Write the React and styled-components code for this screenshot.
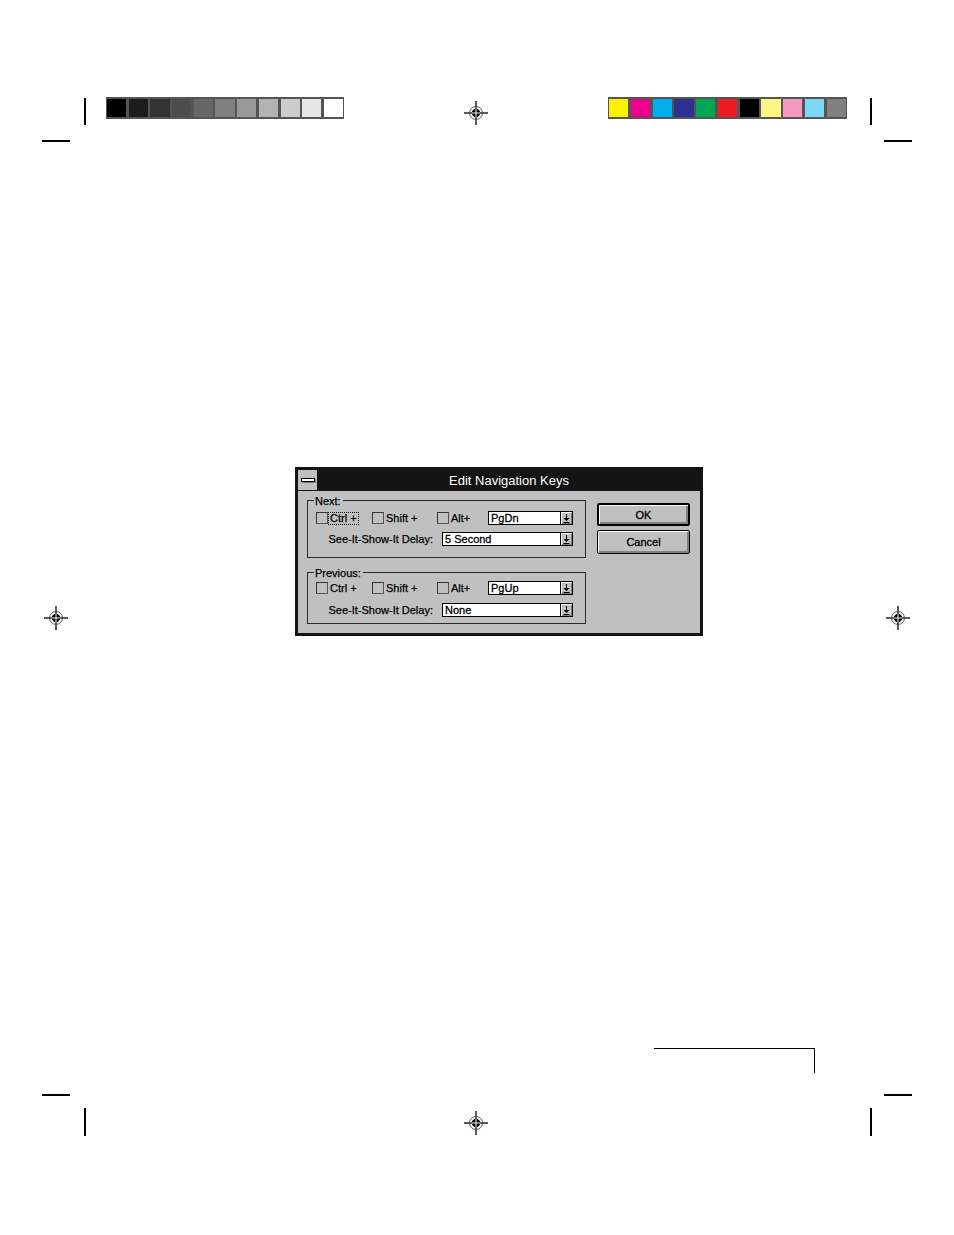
import React from 'react';
import styled, { createGlobalStyle } from 'styled-components';

const Global = createGlobalStyle`
  html, body { margin: 0; padding: 0; background: #fff; }
  body { font-family: "Liberation Sans", Arial, sans-serif; }
`;

const Page = styled.div`
  position: relative;
  width: 954px;
  height: 1235px;
  background: #fff;
  overflow: hidden;
  display: flex;
  flex-direction: column;
  align-items: flex-start;
`;

const TopStrip = styled.div`
  display: flex;
  align-items: flex-start;
  gap: 118px;
  margin: 97px 0 0 106px;
`;

const SwatchBar = styled.div`
  display: flex;
  gap: 2.5px;
  padding: 2px 1px;
  background: #555;
  width: ${p => p.$w}px;
  height: 22px;
  box-sizing: border-box;
`;

const Swatch = styled.div`
  flex: 1;
  background: ${p => p.$c};
`;

const TopReg = styled.div`
  margin-top: 2px;
  width: 28px;
  height: 28px;
`;

const MarkSpot = styled.div`
  position: absolute;
  left: ${p => p.$x}px;
  top: ${p => p.$y}px;
  width: 28px;
  height: 28px;
`;

const CropLine = styled.div`
  position: absolute;
  left: ${p => p.$x}px;
  top: ${p => p.$y}px;
  width: ${p => (p.$vertical ? 1.5 : p.$len)}px;
  height: ${p => (p.$vertical ? p.$len : 1.5)}px;
  background: #000;
`;

const Dialog = styled.div`
  margin: 340px 0 0 295px;
  width: 408px;
  height: 169px;
  box-sizing: border-box;
  border: 3px solid #141414;
  background: #c0c0c0;
  display: flex;
  flex-direction: column;
  color: #000;
`;

const TitleBar = styled.div`
  display: flex;
  height: 21px;
  background: #141414;
  flex-shrink: 0;
`;

const SysBox = styled.div`
  width: 19px;
  height: 20px;
  margin-right: 1px;
  background: #c0c0c0;
  display: flex;
  align-items: center;
  justify-content: center;
`;

const SysBar = styled.div`
  width: 14px;
  height: 4px;
  box-sizing: border-box;
  background: #fff;
  border: 1px solid #000;
  box-shadow: 1px 1px 0 #7a7a7a;
`;

const Title = styled.div`
  flex: 1;
  text-align: center;
  color: #fff;
  font-size: 13px;
  line-height: 22px;
`;

const Body = styled.div`
  flex: 1;
  display: flex;
  gap: 11px;
  padding: 9px 11px 0 9px;
`;

const LeftCol = styled.div`
  width: 279px;
  display: flex;
  flex-direction: column;
  gap: 14px;
`;

const Group = styled.div`
  position: relative;
  border: 1px solid #2a2a2a;
  padding: ${p => p.$pt}px 12px ${p => p.$pb}px 8px;
  display: flex;
  flex-direction: column;
  gap: ${p => p.$gap}px;
`;

const GroupLabel = styled.span`
  position: absolute;
  top: -6px;
  left: 6px;
  padding: 0 2px 0 1px;
  background: #c0c0c0;
  font-size: 11px;
  line-height: 13px;
  -webkit-text-stroke: 0.25px #000;
`;

const KeyRow = styled.div`
  display: flex;
  align-items: center;
  height: 14px;
`;

const CheckItem = styled.div`
  display: flex;
  align-items: center;
  width: ${p => p.$w}px;
`;

const Box = styled.span`
  width: 12px;
  height: 12px;
  box-sizing: border-box;
  border: 1px solid #333;
  border-right-color: #555;
  border-bottom-color: #555;
  flex-shrink: 0;
`;

const CheckText = styled.span`
  font-size: 11px;
  line-height: 11px;
  padding: 0 1px;
  border: 1px dotted ${p => (p.$focus ? '#000' : 'transparent')};
  -webkit-text-stroke: 0.25px #000;
  white-space: nowrap;
`;

const DelayRow = styled.div`
  display: flex;
  align-items: center;
  justify-content: flex-end;
  gap: 9px;
  height: 14px;
`;

const DelayLabel = styled.span`
  font-size: 11px;
  white-space: nowrap;
  -webkit-text-stroke: 0.25px #000;
`;

const Combo = styled.div`
  width: ${p => p.$w}px;
  height: 14px;
  box-sizing: border-box;
  border: 1px solid #000;
  background: #fff;
  display: flex;
  flex-shrink: 0;
`;

const ComboText = styled.span`
  flex: 1;
  padding-left: 2px;
  font-size: 11px;
  line-height: 12px;
  -webkit-text-stroke: 0.3px #000;
`;

const ComboArrow = styled.span`
  width: 11px;
  border-left: 1px solid #000;
  background: #c0c0c0;
  box-shadow: inset 1px 1px 0 #fff, inset -1px -1px 0 #808080;
  display: flex;
  align-items: center;
  justify-content: center;
`;

const ButtonCol = styled.div`
  display: flex;
  flex-direction: column;
  gap: 4px;
  margin-top: 3px;
`;

const Button = styled.div`
  width: 93px;
  height: ${p => p.$h}px;
  box-sizing: border-box;
  border: ${p => (p.$default ? 2 : 1)}px solid #000;
  border-radius: 2px;
  background: #c0c0c0;
  box-shadow: inset 1px 1px 0 #fff, inset -2px -2px 0 #808080;
  display: flex;
  align-items: center;
  justify-content: center;
  font-size: 11px;
  -webkit-text-stroke: 0.3px #000;
`;

const Folio = styled.div`
  margin: 412px 0 0 654px;
  width: 161px;
  height: 25px;
  box-sizing: border-box;
  border-top: 1.5px solid #000;
  border-right: 1.5px solid #000;
`;

const grays = ['#000000', '#1c1c1c', '#333333', '#4d4d4d', '#666666', '#808080', '#999999', '#b3b3b3', '#cccccc', '#e6e6e6', '#ffffff'];
const colors = ['#fff200', '#ec008c', '#00aeef', '#2e3192', '#00a651', '#ed1c24', '#000000', '#fff685', '#f49ac1', '#7fd7f7', '#808080'];

function RegMark() {
  return (
    <svg width="28" height="28" viewBox="0 0 28 28">
      <line x1="2" y1="14" x2="26" y2="14" stroke="#000" strokeWidth="1.3" />
      <line x1="14" y1="2" x2="14" y2="26" stroke="#000" strokeWidth="1.3" />
      <circle cx="14" cy="14" r="6.5" fill="none" stroke="#555" strokeWidth="1" />
      <circle cx="14" cy="14" r="4.2" fill="#000" />
      <line x1="9.8" y1="14" x2="18.2" y2="14" stroke="#fff" strokeWidth="1" />
      <line x1="14" y1="9.8" x2="14" y2="18.2" stroke="#fff" strokeWidth="1" />
    </svg>
  );
}

function DownArrow() {
  return (
    <svg width="7" height="9" viewBox="0 0 7 9">
      <path d="M3 0h1v4h2.5L3.5 7 0.5 4H3z" fill="#000" />
      <rect x="0.5" y="8" width="6" height="1" fill="#000" />
    </svg>
  );
}

function Dropdown({ w, value }) {
  return (
    <Combo $w={w}>
      <ComboText>{value}</ComboText>
      <ComboArrow><DownArrow /></ComboArrow>
    </Combo>
  );
}

function KeyGroup({ label, keyValue, delay, focusCtrl, pt, gap, pb }) {
  return (
    <Group $pt={pt} $gap={gap} $pb={pb}>
      <GroupLabel>{label}</GroupLabel>
      <KeyRow>
        <CheckItem $w={56}><Box /><CheckText $focus={focusCtrl}>Ctrl +</CheckText></CheckItem>
        <CheckItem $w={65}><Box /><CheckText>Shift +</CheckText></CheckItem>
        <CheckItem $w={51}><Box /><CheckText>Alt+</CheckText></CheckItem>
        <Dropdown w={85} value={keyValue} />
      </KeyRow>
      <DelayRow>
        <DelayLabel>See-It-Show-It Delay:</DelayLabel>
        <Dropdown w={131} value={delay} />
      </DelayRow>
    </Group>
  );
}

export default function App() {
  return (
    <>
      <Global />
      <Page>
        <TopStrip>
          <SwatchBar $w={238}>
            {grays.map((c, i) => <Swatch key={i} $c={c} />)}
          </SwatchBar>
          <TopReg><RegMark /></TopReg>
          <SwatchBar $w={239}>
            {colors.map((c, i) => <Swatch key={i} $c={c} />)}
          </SwatchBar>
        </TopStrip>

        <Dialog>
          <TitleBar>
            <SysBox><SysBar /></SysBox>
            <Title>Edit Navigation Keys</Title>
          </TitleBar>
          <Body>
            <LeftCol>
              <KeyGroup label="Next:" keyValue="PgDn" delay="5 Second" focusCtrl pt={10} gap={7} pb={11} />
              <KeyGroup label="Previous:" keyValue="PgUp" delay="None" pt={8} gap={8} pb={6} />
            </LeftCol>
            <ButtonCol>
              <Button $default $h={23}>OK</Button>
              <Button $h={24}>Cancel</Button>
            </ButtonCol>
          </Body>
        </Dialog>

        <Folio />

        <CropLine $vertical $x={84} $y={98} $len={27} />
        <CropLine $vertical $x={870} $y={98} $len={27} />
        <CropLine $x={42} $y={140} $len={28} />
        <CropLine $x={884} $y={140} $len={28} />
        <CropLine $x={42} $y={1094} $len={28} />
        <CropLine $x={884} $y={1094} $len={28} />
        <CropLine $vertical $x={84} $y={1108} $len={28} />
        <CropLine $vertical $x={870} $y={1108} $len={28} />

        <MarkSpot $x={42} $y={604}><RegMark /></MarkSpot>
        <MarkSpot $x={884} $y={604}><RegMark /></MarkSpot>
        <MarkSpot $x={462} $y={1109}><RegMark /></MarkSpot>
      </Page>
    </>
  );
}
